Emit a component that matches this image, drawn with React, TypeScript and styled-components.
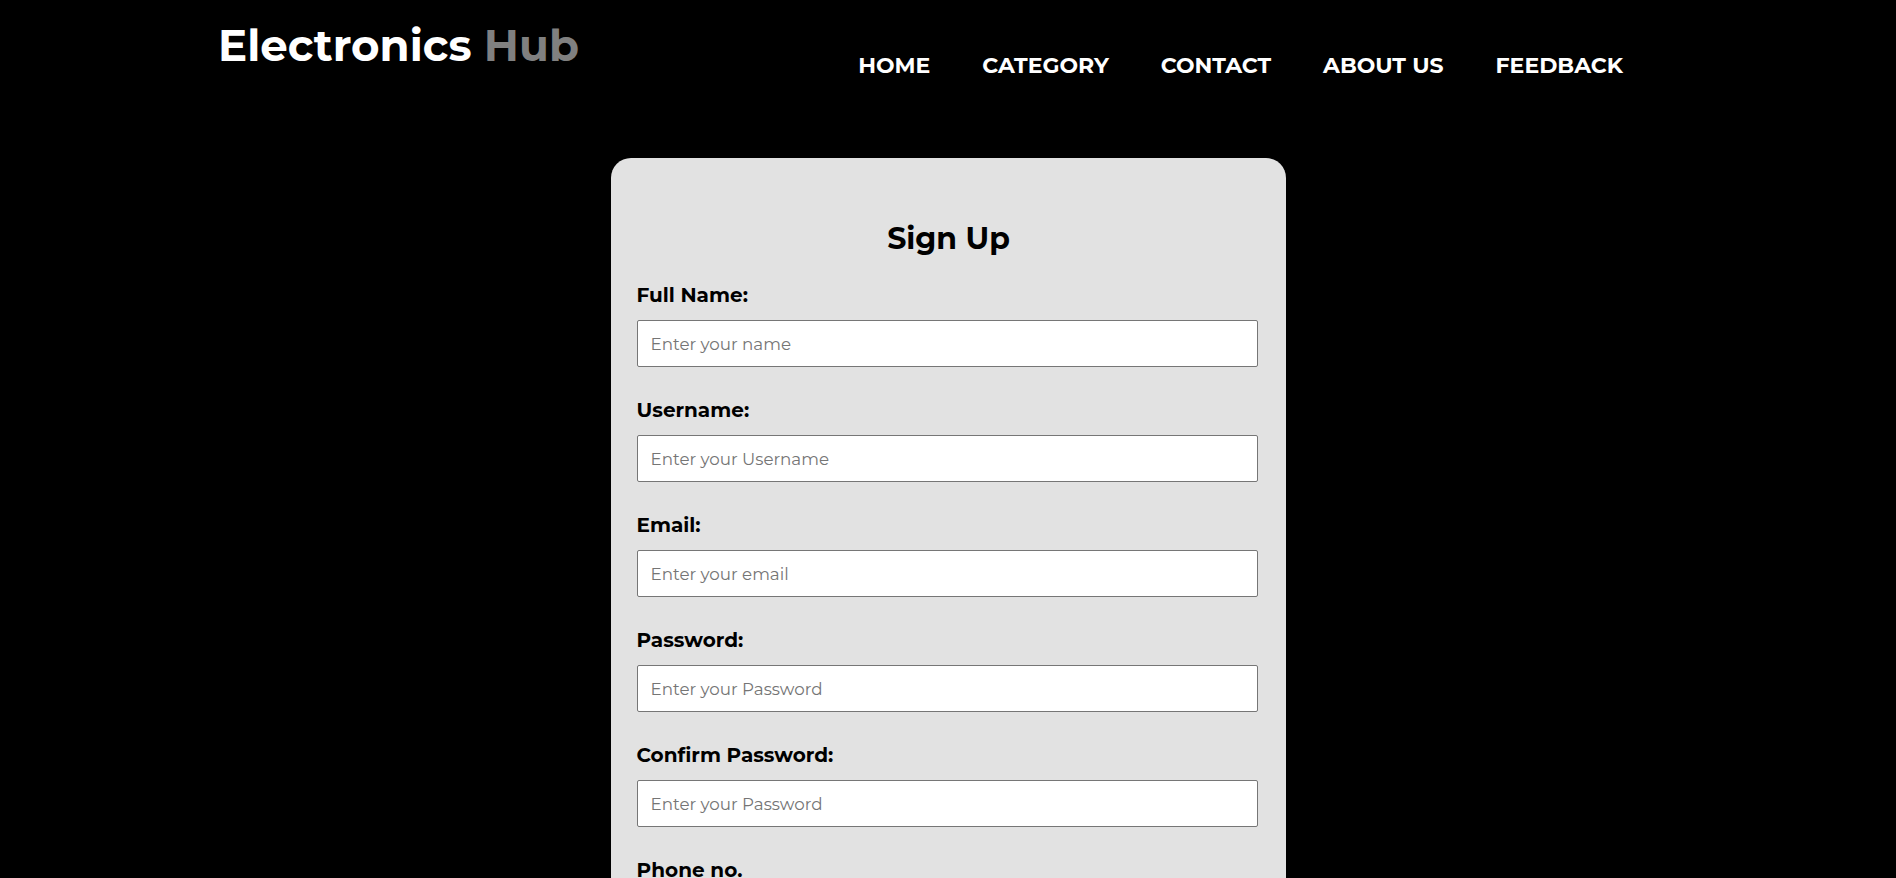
import React from 'react';
import styled, { createGlobalStyle } from 'styled-components';

const GlobalStyle = createGlobalStyle`
  * {
    box-sizing: border-box;
  }
  body {
    margin: 0;
    background: #000;
    font-family: Montserrat, Inter, "Liberation Sans", sans-serif;
  }
`;

const Page = styled.div`
  min-height: 100vh;
  background: #000;
`;

const Header = styled.header`
  display: flex;
  justify-content: space-between;
  align-items: flex-start;
  padding: 20px 273px 0 218px;
`;

const Logo = styled.h1`
  margin: 0;
  font-size: 43.5px;
  line-height: 1.2;
  font-weight: 700;
  color: #fff;
`;

const LogoAccent = styled.span`
  color: #808080;
`;

const Nav = styled.nav`
  display: flex;
  gap: 52px;
  margin-top: 33px;
`;

const NavLink = styled.a`
  font-size: 22px;
  line-height: 1.2;
  font-weight: 700;
  color: #fff;
  text-decoration: none;
  text-transform: uppercase;
  cursor: pointer;
`;

const Main = styled.main`
  padding-top: 79px;
`;

const Card = styled.div`
  width: 675px;
  margin: 0 auto;
  padding: 63px 25px 40px 26px;
  background: #e2e2e2;
  border-radius: 20px;
`;

const Title = styled.h2`
  margin: 0 0 26px;
  font-size: 30px;
  line-height: 1.2;
  font-weight: 700;
  text-align: center;
  color: #000;
`;

const Field = styled.div`
  display: flex;
  flex-direction: column;
  gap: 13px;
  margin-bottom: 31px;
`;

const Label = styled.label`
  font-size: 20px;
  line-height: 1.2;
  font-weight: 700;
  color: #000;
`;

const Input = styled.input`
  width: 621px;
  height: 47px;
  padding: 0 13px;
  border: 1px solid #767676;
  border-radius: 2px;
  background: #fff;
  font-family: inherit;
  font-size: 16.7px;
  color: #000;
  outline: none;

  &::placeholder {
    color: #757575;
  }
`;

const links = ['Home', 'Category', 'Contact', 'About us', 'Feedback'];

const fields = [
  { id: 'name', label: 'Full Name:', type: 'text', placeholder: 'Enter your name' },
  { id: 'username', label: 'Username:', type: 'text', placeholder: 'Enter your Username' },
  { id: 'email', label: 'Email:', type: 'email', placeholder: 'Enter your email' },
  { id: 'password', label: 'Password:', type: 'password', placeholder: 'Enter your Password' },
  { id: 'confirm', label: 'Confirm Password:', type: 'password', placeholder: 'Enter your Password' },
  { id: 'phone', label: 'Phone no.', type: 'tel', placeholder: 'Enter your phone number' },
];

const App: React.FC = () => {
  return (
    <Page>
      <GlobalStyle />

      {/* top bar */}
      <Header>
        <Logo>
          Electronics <LogoAccent>Hub</LogoAccent>
        </Logo>
        <Nav>
          {links.map((item) => (
            <NavLink key={item} href="#">
              {item}
            </NavLink>
          ))}
        </Nav>
      </Header>

      {/* sign up form */}
      <Main>
        <Card>
          <Title>Sign Up</Title>
          <form onSubmit={(e) => e.preventDefault()}>
            {fields.map((f) => (
              <Field key={f.id}>
                <Label htmlFor={f.id}>{f.label}</Label>
                <Input id={f.id} type={f.type} placeholder={f.placeholder} />
              </Field>
            ))}
          </form>
        </Card>
      </Main>
    </Page>
  );
};

export default App;
